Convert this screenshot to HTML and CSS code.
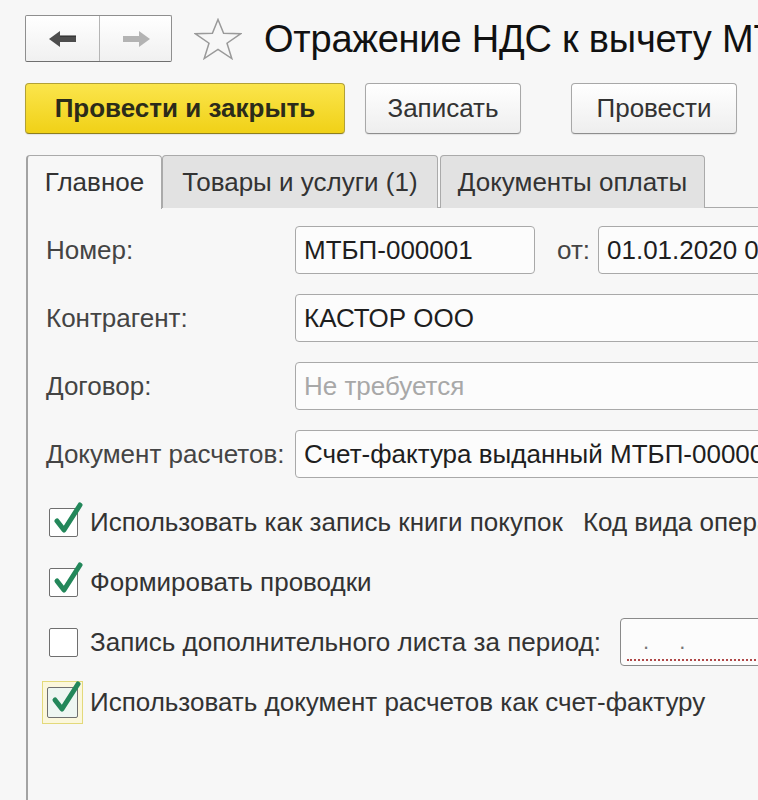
FILE: index.html
```html
<!DOCTYPE html>
<html lang="ru">
<head>
<meta charset="utf-8">
<title>Отражение НДС к вычету</title>
<link rel="stylesheet" href="styles.css">
</head>
<body>
<div class="page">
  <div class="header">
    <div class="nav">
      <span class="nav-btn">
        <svg width="28" height="16" viewBox="0 0 28 16"><path d="M0 8 L11 0 L11 5 L27 5 L27 11 L11 11 L11 16 Z" fill="#4d4d4d"/><path d="M11 5 L27 5" stroke="#222" stroke-width="1"/></svg>
      </span>
      <span class="nav-btn nav-btn-right">
        <svg width="28" height="16" viewBox="0 0 28 16"><path d="M28 8 L17 0 L17 5 L1 5 L1 11 L17 11 L17 16 Z" fill="#b3b3b3"/></svg>
      </span>
    </div>
    <svg class="star" width="48" height="42" viewBox="0 0 48 42"><path d="M24 1.5 L29.6 15.3 L46.5 15.8 L33 25.2 L37.8 40.5 L24 31.3 L10.2 40.5 L15 25.2 L1.5 15.8 L18.4 15.3 Z" fill="none" stroke="#9a9a9a" stroke-width="1.5" stroke-linejoin="miter"/></svg>
    <div class="title">Отражение НДС к вычету МТБП-000001 от 01.01.2020</div>
  </div>

  <div class="toolbar">
    <button class="btn btn-primary">Провести и закрыть</button>
    <button class="btn btn-write">Записать</button>
    <button class="btn btn-post">Провести</button>
  </div>

  <div class="tabs">
    <div class="tab tab-active tab-main">Главное</div>
    <div class="tab tab-goods">Товары и услуги (1)</div>
    <div class="tab tab-docs">Документы оплаты</div>
  </div>

  <div class="panel">
    <div class="row">
      <div class="label">Номер:</div>
      <div class="field field-number">МТБП-000001</div>
      <div class="label-from">от:</div>
      <div class="field field-date">01.01.2020 0:00:00</div>
    </div>
    <div class="row">
      <div class="label">Контрагент:</div>
      <div class="field field-wide">КАСТОР ООО</div>
    </div>
    <div class="row">
      <div class="label">Договор:</div>
      <div class="field field-wide placeholder">Не требуется</div>
    </div>
    <div class="row">
      <div class="label">Документ расчетов:</div>
      <div class="field field-wide">Счет-фактура выданный МТБП-000007 от 01.01.2020</div>
    </div>

    <div class="checks">
      <div class="check-row">
        <span class="box"><svg class="tick" width="34" height="34" viewBox="0 0 34 34"><path d="M6 19 L13 28 L29 3" fill="none" stroke="#23875a" stroke-width="5" stroke-linecap="round" stroke-linejoin="round"/></svg></span>
        <span class="check-text">Использовать как запись книги покупок</span>
        <span class="extra">Код вида операции:</span>
      </div>
      <div class="check-row">
        <span class="box"><svg class="tick" width="34" height="34" viewBox="0 0 34 34"><path d="M6 19 L13 28 L29 3" fill="none" stroke="#23875a" stroke-width="5" stroke-linecap="round" stroke-linejoin="round"/></svg></span>
        <span class="check-text">Формировать проводки</span>
      </div>
      <div class="check-row">
        <span class="box"></span>
        <span class="check-text">Запись дополнительного листа за период:</span>
        <div class="field field-period"><span class="period-mask">.&nbsp;&nbsp;.</span></div>
      </div>
      <div class="check-row">
        <span class="focus-frame"><span class="box box-focus"><svg class="tick" width="34" height="34" viewBox="0 0 34 34"><path d="M6 19 L13 28 L29 3" fill="none" stroke="#23875a" stroke-width="5" stroke-linecap="round" stroke-linejoin="round"/></svg></span></span>
        <span class="check-text check-text-focus">Использовать документ расчетов как счет-фактуру</span>
      </div>
    </div>
  </div>
</div>
</body>
</html>
```

FILE: styles.css
```css
html, body {
  margin: 0;
  padding: 0;
  overflow: hidden;
  background: #f7f7f7;
}

body {
  font-family: "Liberation Sans", Arial, sans-serif;
  color: #333;
  width: 758px;
  height: 800px;
}

.page {
  padding: 15px 0 0 25px;
  width: 1200px;
}

/* header */
.header {
  display: flex;
  align-items: center;
  height: 47px;
}

.nav {
  display: flex;
  height: 47px;
  box-sizing: border-box;
  border: 1px solid #8f8f8f;
  border-bottom-color: #6f6f6f;
  border-radius: 2px;
  background: linear-gradient(#ffffff, #f0f0f0);
}

.nav-btn {
  width: 73px;
  display: flex;
  align-items: center;
  justify-content: center;
}

.nav-btn-right {
  width: 71px;
  border-left: 1px solid #b5b5b5;
}

.star {
  margin-left: 22px;
  flex: none;
}

.title {
  margin-left: 22px;
  font-size: 38px;
  color: #111;
  white-space: nowrap;
  letter-spacing: -0.2px;
  padding-top: 2px;
}

/* toolbar */
.toolbar {
  display: flex;
  margin-top: 21px;
  height: 51px;
}

.btn {
  font-family: "Liberation Sans", Arial, sans-serif;
  font-size: 26px;
  height: 51px;
  box-sizing: border-box;
  border: 1px solid #a8a8a8;
  border-bottom-color: #8e8e8e;
  border-radius: 4px;
  background: linear-gradient(#ffffff, #eeeeee);
  color: #333;
  padding: 0;
  box-shadow: 0 1px 1px rgba(0,0,0,0.08);
}

.btn-primary {
  width: 320px;
  font-weight: bold;
  color: #2b2b1a;
  background: linear-gradient(#fbe54c, #f0d117);
  border-color: #b2a137;
  border-bottom-color: #8e7f1e;
}

.btn-write {
  width: 156px;
  margin-left: 20px;
}

.btn-post {
  width: 166px;
  margin-left: 50px;
}

/* tabs */
.tabs {
  display: flex;
  margin-top: 21px;
  margin-left: 1px;
  height: 53px;
  position: relative;
  z-index: 1;
}

.tab {
  box-sizing: border-box;
  height: 53px;
  display: flex;
  align-items: center;
  justify-content: center;
  font-size: 26px;
  color: #333;
  border: 1px solid #aaaaaa;
  border-bottom: none;
  border-radius: 4px 4px 0 0;
  background: #e2e2e2;
}

.tab-active {
  background: #f7f7f7;
  height: 54px;
  border-left: 2px solid #a3a3a3;
}

.tab-main {
  width: 136px;
}

.tab-goods {
  width: 276px;
}

.tab-docs {
  width: 265px;
  margin-left: 2px;
}

/* panel */
.panel {
  margin-left: 1px;
  margin-top: -1px;
  border-left: 2px solid #a3a3a3;
  border-top: 1px solid #aaaaaa;
  padding: 18px 0 0 18px;
  height: 600px;
}

.row {
  display: flex;
  align-items: center;
  height: 48px;
  margin-bottom: 20px;
}

.label {
  width: 249px;
  flex: none;
  font-size: 26px;
  color: #444;
}

.field {
  box-sizing: border-box;
  height: 48px;
  border: 1px solid #a9a9a9;
  border-radius: 4px;
  background: #fcfcfc;
  padding: 0 8px;
  display: flex;
  align-items: center;
  font-size: 26px;
  color: #1e1e1e;
  white-space: nowrap;
  overflow: hidden;
  flex: none;
}

.field-number {
  width: 240px;
}

.label-from {
  margin-left: 22px;
  width: 41px;
  font-size: 26px;
  color: #444;
}

.field-date {
  width: 320px;
}

.field-wide {
  width: 700px;
}

.placeholder {
  color: #a8a8a8;
}

/* checkboxes */
.checks {
  padding-top: 9px;
}

.check-row {
  display: flex;
  align-items: center;
  height: 30px;
  margin-bottom: 30px;
  white-space: nowrap;
}

.box {
  flex: none;
  width: 29px;
  height: 29px;
  box-sizing: border-box;
  border: 1px solid #6f6f6f;
  border-radius: 2px;
  background: #ffffff;
  margin-left: 3px;
  position: relative;
}

.tick {
  position: absolute;
  left: 1px;
  top: -7px;
  overflow: visible;
}

.check-text {
  margin-left: 12px;
  font-size: 26px;
  color: #333;
}

.extra {
  margin-left: 20px;
  font-size: 26px;
  color: #333;
}

.field-period {
  margin-left: 19px;
  width: 200px;
  position: relative;
  border-color: #8a8a8a;
}

.field-period::after {
  content: "";
  position: absolute;
  left: 6px;
  right: 0;
  bottom: 4px;
  border-bottom: 2px dotted #b04848;
}

.period-mask {
  color: #777;
  font-size: 22px;
  padding-left: 14px;
  letter-spacing: 6px;
}

.focus-frame {
  flex: none;
  display: flex;
  margin-left: -4px;
  padding: 5px 4px;
  border: 1px solid #e3d97a;
  background: #fbf7dc;
}

.box-focus {
  margin-left: 0;
  width: 31px;
  height: 31px;
  background: #eef6f2;
}

.check-text-focus {
  margin-left: 7px;
}
```
